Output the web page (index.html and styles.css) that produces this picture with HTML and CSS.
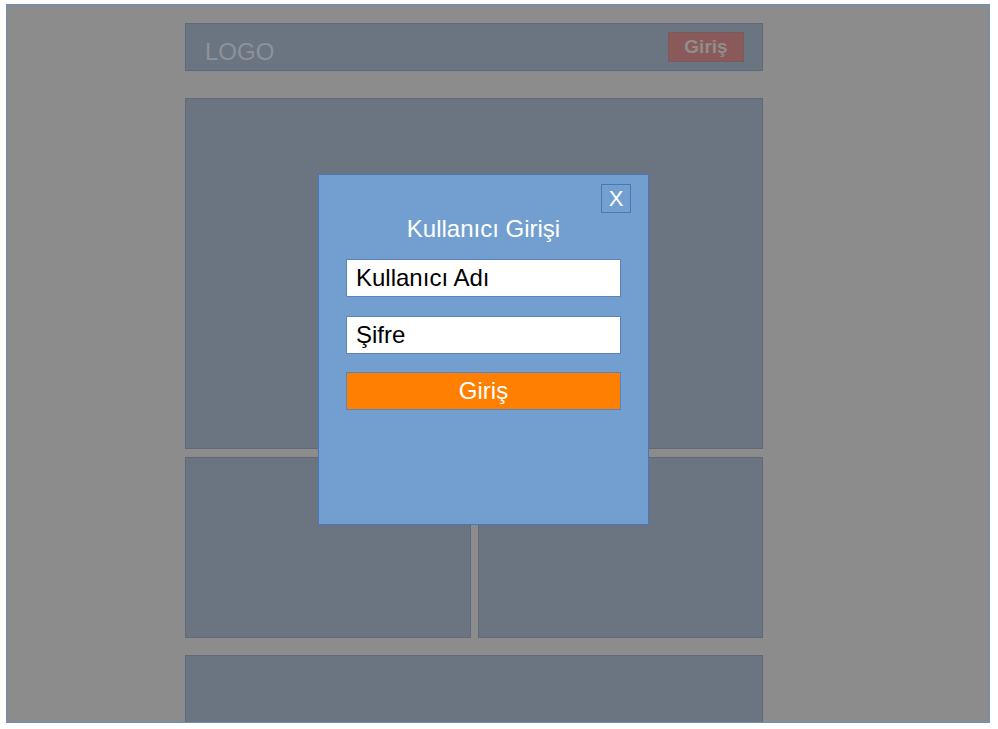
FILE: index.html
```html
<!DOCTYPE html>
<html lang="tr">
<head>
<meta charset="utf-8">
<title>Giriş</title>
<link rel="stylesheet" href="styles.css">
</head>
<body>
<div class="frame">
  <div class="column">
    <header class="box header">
      <span class="logo">LOGO</span>
      <span class="hdr-btn">Giriş</span>
    </header>
    <section class="box main"></section>
    <div class="row">
      <div class="box half"></div>
      <div class="box half"></div>
    </div>
    <footer class="box footer"></footer>
  </div>

  <div class="modal">
    <div class="close-row"><span class="close">X</span></div>
    <div class="title">Kullanıcı Girişi</div>
    <div class="field">Kullanıcı Adı</div>
    <div class="field field-2">Şifre</div>
    <div class="submit">Giriş</div>
  </div>
</div>
</body>
</html>
```

FILE: styles.css
```css
* { box-sizing: border-box; }

html, body {
  margin: 0;
  padding: 0;
  background: #ffffff;
  font-family: "Liberation Sans", Arial, sans-serif;
}

.frame {
  position: relative;
  margin: 4px 0 0 6px;
  width: 984px;
  height: 719px;
  background: #8c8c8c;
  border: 1px solid #6c8ebf;
  overflow: hidden;
}

.column {
  margin-left: 178px;
  width: 578px;
  padding-top: 18px;
  display: flex;
  flex-direction: column;
}

.box {
  background: #6b7481;
  border: 1px solid #5f6a78;
}

.header {
  height: 48px;
  display: flex;
  align-items: flex-start;
  justify-content: space-between;
  padding: 0 18px 0 19px;
}

.logo {
  font-size: 24px;
  line-height: 26px;
  margin-top: 15px;
  color: #8b929c;
}

.hdr-btn {
  margin-top: 8px;
  width: 76px;
  height: 30px;
  background: #8a5a5a;
  border: 1px solid #7b5a5e;
  color: #8e8e8e;
  font-weight: bold;
  font-size: 19px;
  line-height: 28px;
  text-align: center;
}

.main {
  margin-top: 27px;
  height: 351px;
}

.row {
  margin-top: 8px;
  display: grid;
  grid-template-columns: 286px 285px;
  column-gap: 7px;
}

.half { height: 181px; }

.footer {
  margin-top: 17px;
  height: 80px;
}

.modal {
  position: absolute;
  left: 311px;
  top: 169px;
  width: 331px;
  height: 351px;
  background: #729fcf;
  border: 1px solid #4a78b6;
  display: flex;
  flex-direction: column;
  padding: 9px 27px 0 27px;
}

.close-row {
  display: flex;
  justify-content: flex-end;
  margin-right: -10px;
}

.close {
  width: 30px;
  height: 29px;
  border: 1px solid #4a78b6;
  color: #ffffff;
  font-size: 22px;
  line-height: 27px;
  text-align: center;
}

.title {
  margin-top: 3px;
  font-size: 24px;
  line-height: 26px;
  color: #ffffff;
  text-align: center;
}

.field {
  margin-top: 17px;
  height: 38px;
  background: #ffffff;
  border: 1px solid #5a84bd;
  color: #000000;
  font-size: 24px;
  line-height: 36px;
  padding-left: 9px;
}

.field-2 { margin-top: 19px; }

.submit {
  margin-top: 18px;
  height: 38px;
  background: #ff8000;
  border: 1px solid #5a84bd;
  color: #ffffff;
  font-size: 24px;
  line-height: 36px;
  text-align: center;
}
```
